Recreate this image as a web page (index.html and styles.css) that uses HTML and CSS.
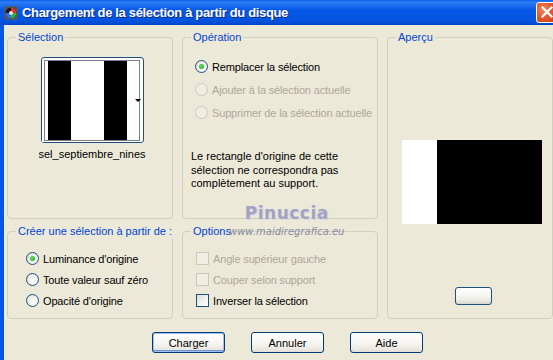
FILE: index.html
```html
<!DOCTYPE html>
<html lang="fr">
<head>
    <meta charset="UTF-8">
    <title>Chargement de la sélection à partir du disque</title>
    <link rel="stylesheet" href="styles.css">
</head>
<body>
    <div class="window">
        <header class="titlebar">
            <svg class="app-icon" width="16" height="16" viewBox="0 0 16 16">
                <rect x="1" y="1" width="14" height="14" rx="3" fill="#4a5a6a"/>
                <circle cx="8" cy="8" r="5.5" fill="#1a1a1a"/>
                <path d="M8 2.5 A5.5 5.5 0 0 1 13.5 8 L8 8 Z" fill="#e03030"/>
                <path d="M13.5 8 A5.5 5.5 0 0 1 8 13.5 L8 8 Z" fill="#30b040"/>
                <path d="M8 13.5 A5.5 5.5 0 0 1 2.5 8 L8 8 Z" fill="#3070e0"/>
                <circle cx="8" cy="8" r="2" fill="#e8e8e8"/>
            </svg>
            <span class="title">Chargement de la sélection à partir du disque</span>
            <span class="close">
                <svg width="12" height="12" viewBox="0 0 12 12">
                    <path d="M1.5 1.5 L10.5 10.5 M10.5 1.5 L1.5 10.5" stroke="#fff" stroke-width="2.2" stroke-linecap="square"/>
                </svg>
            </span>
        </header>

        <main class="client">
            <div class="panes">
                <section class="group sel-group">
                    <span class="group-title">Sélection</span>
                    <button class="thumb">
                        <svg width="100" height="83" viewBox="0 0 100 83">
                            <rect x="0" y="0" width="100" height="83" fill="#fff"/>
                            <rect x="6" y="2" width="23" height="79" fill="#000"/>
                            <rect x="62" y="2" width="23" height="79" fill="#000"/>
                            <rect x="2.5" y="1.5" width="95" height="80" fill="none" stroke="#000" stroke-width="1" stroke-dasharray="1 1"/>
                            <path d="M93 40 L99 40 L96 43 Z" fill="#000"/>
                        </svg>
                    </button>
                    <div class="thumb-name">sel_septiembre_nines</div>
                </section>

                <section class="group op-group">
                    <span class="group-title">Opération</span>
                    <ul class="choices op-choices">
                        <li><span class="radio checked"></span>Remplacer la sélection</li>
                        <li class="disabled"><span class="radio"></span>Ajouter à la sélection actuelle</li>
                        <li class="disabled"><span class="radio"></span>Supprimer de la sélection actuelle</li>
                    </ul>
                    <p class="note">Le rectangle d'origine de cette sélection ne correspondra pas complètement au support.</p>
                </section>

                <section class="group preview-group">
                    <span class="group-title">Aperçu</span>
                    <div class="preview">
                        <div class="preview-white"></div>
                        <div class="preview-black"></div>
                    </div>
                    <button class="zoom-btn"></button>
                </section>

                <section class="group create-group">
                    <span class="group-title">Créer une sélection à partir de :</span>
                    <ul class="choices">
                        <li><span class="radio checked"></span>Luminance d'origine</li>
                        <li><span class="radio"></span>Toute valeur sauf zéro</li>
                        <li><span class="radio"></span>Opacité d'origine</li>
                    </ul>
                </section>

                <section class="group opt-group">
                    <span class="group-title">Options</span>
                    <ul class="choices opt-choices">
                        <li class="disabled"><span class="check"></span>Angle supérieur gauche</li>
                        <li class="disabled"><span class="check"></span>Couper selon support</li>
                        <li><span class="check"></span>Inverser la sélection</li>
                    </ul>
                </section>
            </div>

            <div class="actions">
                <button class="btn default">Charger</button>
                <button class="btn">Annuler</button>
                <button class="btn">Aide</button>
            </div>

            <div class="watermark">
                <span class="wm-name">Pinuccia</span>
                <span class="wm-url">www.maidiregrafica.eu</span>
            </div>
        </main>
    </div>
</body>
</html>
```

FILE: styles.css
```css
* {
    margin: 0;
    padding: 0;
    box-sizing: border-box;
}

body {
    font-family: "Liberation Sans", Arial, sans-serif;
    font-size: 11px;
    color: #000;
    background: #ece9d8;
    width: 553px;
    height: 360px;
    overflow: hidden;
}

.window {
    height: 360px;
    display: flex;
    flex-direction: column;
}

/* Title bar */
.titlebar {
    height: 25px;
    display: flex;
    align-items: center;
    padding-left: 3px;
    background: linear-gradient(to bottom, #0a5fe8 0%, #2d7df5 8%, #0558e6 40%, #0453df 85%, #0346c7 100%);
    color: #fff;
}

.app-icon {
    flex: none;
    margin-top: 1px;
}

.title {
    margin-left: 3px;
    font-family: "Liberation Sans", Arial, sans-serif;
    font-weight: bold;
    font-size: 13px;
    letter-spacing: -0.35px;
    white-space: nowrap;
    text-shadow: 1px 1px 0 #0a2a88;
}

.close {
    margin-left: auto;
    width: 21px;
    height: 21px;
    margin-top: -1px;
    margin-right: -4px;
    display: flex;
    align-items: center;
    justify-content: center;
    border: 1px solid #fff;
    border-radius: 3px;
    background: radial-gradient(circle at 35% 35%, #f08a64 0%, #e25a30 45%, #c43c12 100%);
}

/* Client area */
.client {
    flex: 1;
    position: relative;
    border-left: 4px solid #0355e2;
    padding: 12px 0 0 3px;
}

.panes {
    display: grid;
    grid-template-columns: 166px 196px 166px;
    grid-template-rows: 182px 88px;
    column-gap: 9px;
    row-gap: 12px;
}

.group {
    position: relative;
    border: 1px solid #d0d0bf;
    border-radius: 4px;
}

.group-title {
    position: absolute;
    top: -7px;
    left: 8px;
    padding: 0 2px;
    background: #ece9d8;
    color: #0046d5;
    line-height: 13px;
    white-space: nowrap;
}

/* Sélection */
.sel-group {
    display: flex;
    flex-direction: column;
    align-items: center;
    padding: 19px 0 0 4px;
}

.thumb {
    width: 103px;
    height: 86px;
    border: 1px solid #1c5180;
    border-radius: 3px;
    background: #fff;
    display: flex;
    align-items: center;
    justify-content: center;
}

.thumb svg {
    display: block;
}

.thumb-name {
    margin-top: 4px;
    line-height: 14px;
    white-space: nowrap;
}

/* Radios and checkboxes */
.choices {
    list-style: none;
    display: flex;
    flex-direction: column;
}

.choices li {
    display: flex;
    align-items: center;
    height: 21px;
    white-space: nowrap;
    letter-spacing: -0.15px;
}

.choices li.disabled {
    color: #aca899;
}

.radio {
    flex: none;
    width: 13px;
    height: 13px;
    margin-right: 4px;
    border: 1px solid #1c5180;
    border-radius: 50%;
    background: radial-gradient(circle at 65% 65%, #ffffff 0%, #ecebe6 60%, #d6d3c6 100%);
    position: relative;
}

.radio.checked::after {
    content: "";
    position: absolute;
    left: 3px;
    top: 3px;
    width: 5px;
    height: 5px;
    border-radius: 50%;
    background: radial-gradient(circle at 40% 40%, #5ee15e, #21a121);
}

.disabled .radio {
    border-color: #cac8bb;
    background: #f1efe4;
}

.check {
    flex: none;
    width: 13px;
    height: 13px;
    margin-right: 4px;
    border: 1px solid #1c5180;
    background: linear-gradient(135deg, #dcdcd7 0%, #f4f4f0 60%, #ffffff 100%);
}

.disabled .check {
    border-color: #cac8bb;
    background: #f1efe4;
}

/* Opération */
.op-group {
    padding: 17px 0 0 12px;
}

.op-choices li {
    height: 23px;
}

.note {
    margin: 26px 0 0 -4px;
    width: 180px;
    line-height: 13.5px;
}

/* Aperçu */
.preview-group {
    grid-row: 1 / 3;
    grid-column: 3;
    display: flex;
    flex-direction: column;
    align-items: center;
    padding: 102px 0 0 3px;
}

.preview {
    display: flex;
    width: 140px;
    height: 84px;
}

.preview-white {
    width: 35px;
    background: #fff;
}

.preview-black {
    flex: 1;
    background: #000;
}

.zoom-btn {
    margin-top: 63px;
    margin-left: 4px;
    width: 37px;
    height: 18px;
    border: 1px solid #1c5180;
    border-radius: 3px;
    background: linear-gradient(to bottom, #ffffff 0%, #f0f0ea 70%, #d8d6cc 100%);
}

/* Créer / Options */
.create-group {
    padding: 16px 0 0 18px;
}

.opt-group {
    padding: 16px 0 0 13px;
}

/* Buttons */
.actions {
    display: flex;
    gap: 26px;
    padding: 13px 0 0 145px;
}

.btn {
    width: 73px;
    height: 21px;
    font-family: "Liberation Sans", Arial, sans-serif;
    font-size: 11px;
    color: #000;
    border: 1px solid #003c74;
    border-radius: 3px;
    background: linear-gradient(to bottom, #ffffff 0%, #f5f4ef 60%, #e3e1d6 100%);
}

.btn.default {
    box-shadow: inset 0 0 0 1px #a3c0ee, inset 0 -1px 0 1px #6f95dd;
}

/* Watermark over the dialog */
.watermark {
    position: absolute;
    left: 225px;
    top: 178px;
    display: flex;
    flex-direction: column;
    align-items: center;
    pointer-events: none;
}

.wm-name {
    font-family: "DejaVu Sans", sans-serif;
    font-weight: bold;
    font-size: 17px;
    letter-spacing: 0.5px;
    color: #a2a3c2;
    text-shadow: 1px 1px 0 #d8d8e4;
    line-height: 20px;
}

.wm-url {
    margin-top: 3px;
    font-family: "DejaVu Sans", sans-serif;
    font-style: italic;
    font-size: 10px;
    color: #8a8aa4;
    line-height: 12px;
}
```
